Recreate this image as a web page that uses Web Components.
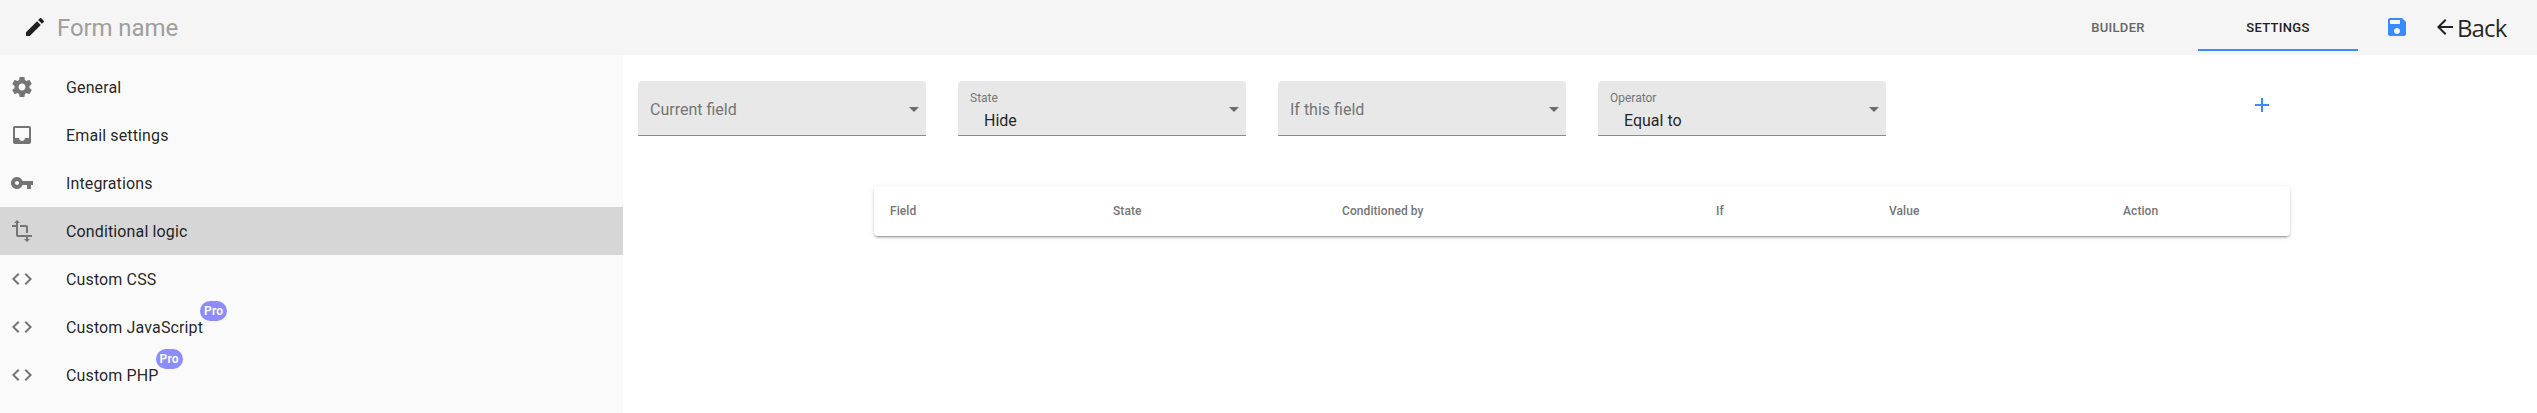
<!DOCTYPE html>
<html lang="en">
<head>
<meta charset="utf-8">
<title>Form settings</title>
<style>
  body {
    margin: 0;
    height: 413px;
    background: #fff;
    color: rgba(0, 0, 0, 0.87);
    font-family: Roboto, "Liberation Sans", sans-serif;
    --primary: #3a8bff;
  }
</style>
</head>
<body>
<form-settings></form-settings>

<script>
const ICONS = {
  edit: 'M3 17.25V21h3.75L17.81 9.94l-3.75-3.75L3 17.25zM20.71 7.04c.39-.39.39-1.02 0-1.41l-2.34-2.34c-.39-.39-1.02-.39-1.41 0l-1.83 1.83 3.75 3.75 1.83-1.83z',
  settings: 'M19.43 12.98c.04-.32.07-.64.07-.98s-.03-.66-.07-.98l2.11-1.65c.19-.15.24-.42.12-.64l-2-3.46c-.12-.22-.39-.3-.61-.22l-2.49 1c-.52-.4-1.08-.73-1.69-.98l-.38-2.65C14.46 2.18 14.25 2 14 2h-4c-.25 0-.46.18-.49.42l-.38 2.65c-.61.25-1.17.59-1.69.98l-2.49-1c-.23-.09-.49 0-.61.22l-2 3.46c-.13.22-.07.49.12.64l2.11 1.65c-.04.32-.07.65-.07.98s.03.66.07.98l-2.11 1.65c-.19.15-.24.42-.12.64l2 3.46c.12.22.39.3.61.22l2.49-1c.52.4 1.08.73 1.69.98l.38 2.65c.03.24.24.42.49.42h4c.25 0 .46-.18.49-.42l.38-2.65c.61-.25 1.17-.59 1.69-.98l2.49 1c.23.09.49 0 .61-.22l2-3.46c.12-.22.07-.49-.12-.64l-2.11-1.65zM12 15.5c-1.93 0-3.5-1.57-3.5-3.5s1.57-3.5 3.5-3.5 3.5 1.57 3.5 3.5-1.57 3.5-3.5 3.5z',
  inbox: 'M19 3H4.99c-1.11 0-1.98.89-1.98 2L3 19c0 1.1.88 2 1.99 2H19c1.1 0 2-.9 2-2V5c0-1.11-.9-2-2-2zm0 12h-4c0 1.66-1.35 3-3 3s-3-1.34-3-3H4.99V5H19v10z',
  key: 'M12.65 10C11.83 7.67 9.61 6 7 6c-3.31 0-6 2.69-6 6s2.69 6 6 6c2.61 0 4.83-1.67 5.65-4H17v4h4v-4h2v-4H12.65zM7 14c-1.1 0-2-.9-2-2s.9-2 2-2 2 .9 2 2-.9 2-2 2z',
  transform: 'M22 18v-2H8V4h2L7 1 4 4h2v2H2v2h4v8c0 1.1.9 2 2 2h8v2h-2l3 3 3-3h-2v-2h4zM10 8h6v6h2V8c0-1.1-.9-2-2-2h-6v2z',
  code: 'M9.4 16.6L4.8 12l4.6-4.6L8 6l-6 6 6 6 1.4-1.4zm5.2 0l4.6-4.6-4.6-4.6L16 6l6 6-6 6-1.4-1.4z',
  save: 'M17 3H5c-1.11 0-2 .9-2 2v14c0 1.1.89 2 2 2h14c1.1 0 2-.9 2-2V7l-4-4zm-5 16c-1.66 0-3-1.34-3-3s1.34-3 3-3 3 1.34 3 3-1.34 3-3 3zm3-10H5V5h10v4z',
  back: 'M20 11H7.83l5.59-5.59L12 4l-8 8 8 8 1.41-1.41L7.83 13H20v-2z',
  add: 'M19 13h-6v6h-2v-6H5v-2h6V5h2v6h6v2z'
};

class MdIcon extends HTMLElement {
  connectedCallback() {
    this.attachShadow({ mode: 'open' }).innerHTML = `
      <style>
        :host { display: block; flex: none; width: 24px; height: 24px; }
        svg { display: block; width: 100%; height: 100%; fill: currentColor; }
      </style>
      <svg viewBox="0 0 24 24"><path d="${ICONS[this.getAttribute('name')]}"/></svg>
    `;
  }
}

class NavItem extends HTMLElement {
  connectedCallback() {
    this.attachShadow({ mode: 'open' }).innerHTML = `
      <style>
        :host {
          display: flex;
          align-items: center;
          gap: 32px;
          height: 48px;
          padding-left: 10px;
          font-size: 16px;
          letter-spacing: 0.13px;
          line-height: 24px;
        }
        :host([active]) { background: #d6d6d6; }
        md-icon { color: #757575; }
        .label { position: relative; padding-top: 2px; }
        .badge {
          position: absolute;
          left: calc(100% - 3px);
          top: -13px;
          padding: 0 4px;
          border-radius: 10px;
          background: #8c8cfc;
          color: #fff;
          font-size: 12px;
          font-weight: 600;
          line-height: 20px;
        }
      </style>
      <md-icon name="${this.getAttribute('icon')}"></md-icon>
      <span class="label"><slot></slot>${this.hasAttribute('pro') ? '<span class="badge">Pro</span>' : ''}</span>
    `;
  }
}

class TabButton extends HTMLElement {
  connectedCallback() {
    this.attachShadow({ mode: 'open' }).innerHTML = `
      <style>
        :host {
          display: flex;
          align-items: center;
          justify-content: center;
          box-sizing: border-box;
          width: 160px;
          height: 48px;
          border-top: 2px solid transparent;
          border-bottom: 2px solid transparent;
          color: #666;
          font-size: 13px;
          font-weight: 500;
          letter-spacing: 0.3px;
          text-transform: uppercase;
        }
        :host([active]) { color: #212121; border-bottom-color: var(--primary); }
      </style>
      <slot></slot>
    `;
  }
}

class TopBar extends HTMLElement {
  connectedCallback() {
    this.attachShadow({ mode: 'open' }).innerHTML = `
      <style>
        :host {
          display: flex;
          align-items: center;
          box-sizing: border-box;
          height: 55px;
          padding: 0 0 1px 23px;
          background: #f5f5f5;
        }
        .name {
          flex: 1;
          margin-left: 10px;
          padding-top: 2px;
          color: #9e9e9e;
          font-size: 24px;
          letter-spacing: -0.1px;
        }
        .save { margin: 0 24px 0 27px; color: var(--primary); }
        .back {
          display: flex;
          align-items: center;
          width: 104px;
          font: 24px/32px "Open Sans", "Noto Sans", sans-serif;
          letter-spacing: -0.9px;
        }
        .back span { padding-top: 2px; }
      </style>
      <md-icon name="edit"></md-icon>
      <span class="name">Form name</span>
      <slot></slot>
      <md-icon class="save" name="save"></md-icon>
      <span class="back"><md-icon name="back"></md-icon><span>Back</span></span>
    `;
  }
}

class SelectField extends HTMLElement {
  connectedCallback() {
    const value = this.getAttribute('value');
    this.attachShadow({ mode: 'open' }).innerHTML = `
      <style>
        :host {
          display: flex;
          align-items: center;
          justify-content: space-between;
          box-sizing: border-box;
          width: 288px;
          height: 55px;
          padding: 0 7px 0 12px;
          border-bottom: 1px solid #8a8a8a;
          border-radius: 4px 4px 0 0;
          background: #e8e8e8;
          font-size: 16px;
        }
        .text { display: flex; flex-direction: column; padding-top: 4px; }
        .label { color: #757575; line-height: 20px; }
        .filled { padding-top: 6px; }
        .filled .label { font-size: 12px; line-height: 20px; }
        .value { padding-left: 14px; line-height: 26px; }
        .arrow {
          margin-top: 2px;
          border: 5px solid transparent;
          border-top-color: #6b6b6b;
          border-bottom: 0;
        }
      </style>
      <div class="text ${value ? 'filled' : ''}">
        <span class="label">${this.getAttribute('label')}</span>
        ${value ? `<span class="value">${value}</span>` : ''}
      </div>
      <span class="arrow"></span>
    `;
  }
}

class RulesTable extends HTMLElement {
  connectedCallback() {
    this.attachShadow({ mode: 'open' }).innerHTML = `
      <style>
        :host {
          display: grid;
          grid-template-columns: 223px 229px 374px 173px 234px 1fr;
          align-items: center;
          box-sizing: border-box;
          width: 1416px;
          height: 50px;
          padding-left: 16px;
          border-radius: 4px;
          background: #fff;
          box-shadow: 0 3px 1px -2px rgba(0, 0, 0, 0.2), 0 2px 2px 0 rgba(0, 0, 0, 0.14), 0 1px 5px 0 rgba(0, 0, 0, 0.12);
          color: #757575;
          font-size: 12px;
          font-weight: 500;
          letter-spacing: 0.08px;
        }
      </style>
      ${['Field', 'State', 'Conditioned by', 'If', 'Value', 'Action'].map(t => `<span>${t}</span>`).join('')}
    `;
  }
}

class FormSettings extends HTMLElement {
  connectedCallback() {
    this.attachShadow({ mode: 'open' }).innerHTML = `
      <style>
        :host { display: flex; flex-direction: column; height: 100%; }
        .body { display: flex; flex: 1; }
        nav { width: 623px; box-sizing: border-box; padding-top: 8px; background: #fafafa; }
        main { flex: 1; padding: 26px 0 0 15px; }
        .row { display: flex; gap: 32px; height: 105px; }
        .add { margin: 12px 263px 0 auto; color: var(--primary); }
        rules-table { margin-left: 236px; }
      </style>
      <top-bar>
        <tab-button>Builder</tab-button>
        <tab-button active>Settings</tab-button>
      </top-bar>
      <div class="body">
        <nav>
          <nav-item icon="settings">General</nav-item>
          <nav-item icon="inbox">Email settings</nav-item>
          <nav-item icon="key">Integrations</nav-item>
          <nav-item icon="transform" active>Conditional logic</nav-item>
          <nav-item icon="code">Custom CSS</nav-item>
          <nav-item icon="code" pro>Custom JavaScript</nav-item>
          <nav-item icon="code" pro>Custom PHP</nav-item>
        </nav>
        <main>
          <div class="row">
            <select-field label="Current field"></select-field>
            <select-field label="State" value="Hide"></select-field>
            <select-field label="If this field"></select-field>
            <select-field label="Operator" value="Equal to"></select-field>
            <md-icon class="add" name="add"></md-icon>
          </div>
          <rules-table></rules-table>
        </main>
      </div>
    `;
  }
}

customElements.define('md-icon', MdIcon);
customElements.define('nav-item', NavItem);
customElements.define('tab-button', TabButton);
customElements.define('top-bar', TopBar);
customElements.define('select-field', SelectField);
customElements.define('rules-table', RulesTable);
customElements.define('form-settings', FormSettings);
</script>
</body>
</html>
